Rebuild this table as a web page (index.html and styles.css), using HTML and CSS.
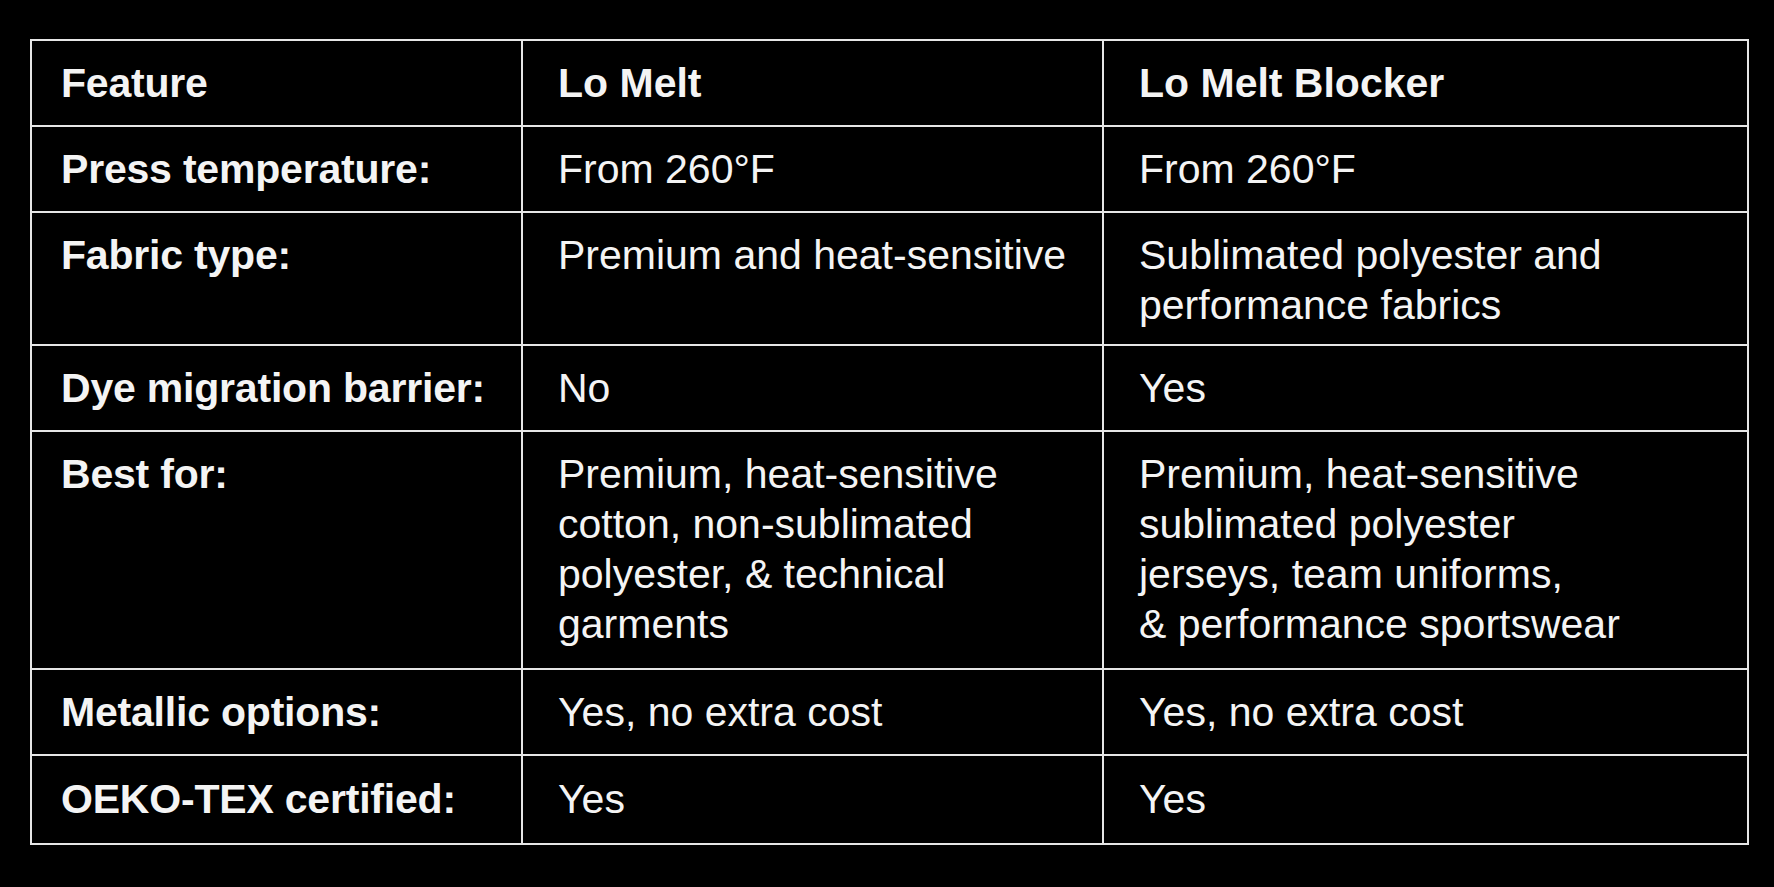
FILE: index.html
```html
<!DOCTYPE html>
<html lang="en">
<head>
<meta charset="utf-8">
<title>Lo Melt comparison</title>
<link rel="stylesheet" href="styles.css">
</head>
<body>
<main class="page">
  <table class="compare">
    <colgroup>
      <col class="col-feature">
      <col class="col-a">
      <col class="col-b">
    </colgroup>
    <thead>
      <tr>
        <th class="label">Feature</th>
        <th class="value">Lo Melt</th>
        <th class="value">Lo Melt Blocker</th>
      </tr>
    </thead>
    <tbody>
      <tr>
        <th class="label">Press temperature:</th>
        <td class="value">From 260°F</td>
        <td class="value">From 260°F</td>
      </tr>
      <tr class="row-tight">
        <th class="label">Fabric type:</th>
        <td class="value">Premium and heat-sensitive</td>
        <td class="value">Sublimated polyester and<br>performance fabrics</td>
      </tr>
      <tr>
        <th class="label">Dye migration barrier:</th>
        <td class="value">No</td>
        <td class="value">Yes</td>
      </tr>
      <tr class="row-long">
        <th class="label">Best for:</th>
        <td class="value">Premium, heat-sensitive<br>cotton, non-sublimated<br>polyester, &amp; technical<br>garments</td>
        <td class="value">Premium, heat-sensitive<br>sublimated polyester<br>jerseys, team uniforms,<br>&amp; performance sportswear</td>
      </tr>
      <tr>
        <th class="label">Metallic options:</th>
        <td class="value">Yes, no extra cost</td>
        <td class="value">Yes, no extra cost</td>
      </tr>
      <tr class="row-last">
        <th class="label">OEKO-TEX certified:</th>
        <td class="value">Yes</td>
        <td class="value">Yes</td>
      </tr>
    </tbody>
  </table>
</main>
</body>
</html>
```
FILE: styles.css
```css
html, body {
  margin: 0;
  padding: 0;
  background: #000;
}

.page {
  padding: 39px 0 0 30px;
  font-family: "Liberation Sans", Arial, Helvetica, sans-serif;
  color: #f4f4f4;
}

.compare {
  border-collapse: collapse;
  table-layout: fixed;
  width: 1717px;
  font-size: 41px;
  line-height: 50px;
}

.col-feature { width: 491px; }
.col-a { width: 581px; }
.col-b { width: 645px; }

.compare th,
.compare td {
  border: 2px solid #e6e6e6;
  vertical-align: top;
  text-align: left;
  padding: 17px 16px 17px 35px;
}

.compare .label {
  font-weight: 700;
  padding-left: 29px;
  letter-spacing: -0.2px;
}

.compare thead .value {
  font-weight: 700;
}

.compare tbody .value {
  font-weight: 400;
}

.compare .row-tight th,
.compare .row-tight td {
  padding-bottom: 14px;
}

.compare .row-long th,
.compare .row-long td {
  padding-bottom: 19px;
}

.compare .row-last th,
.compare .row-last td {
  padding-top: 18px;
  padding-bottom: 19px;
}
```
